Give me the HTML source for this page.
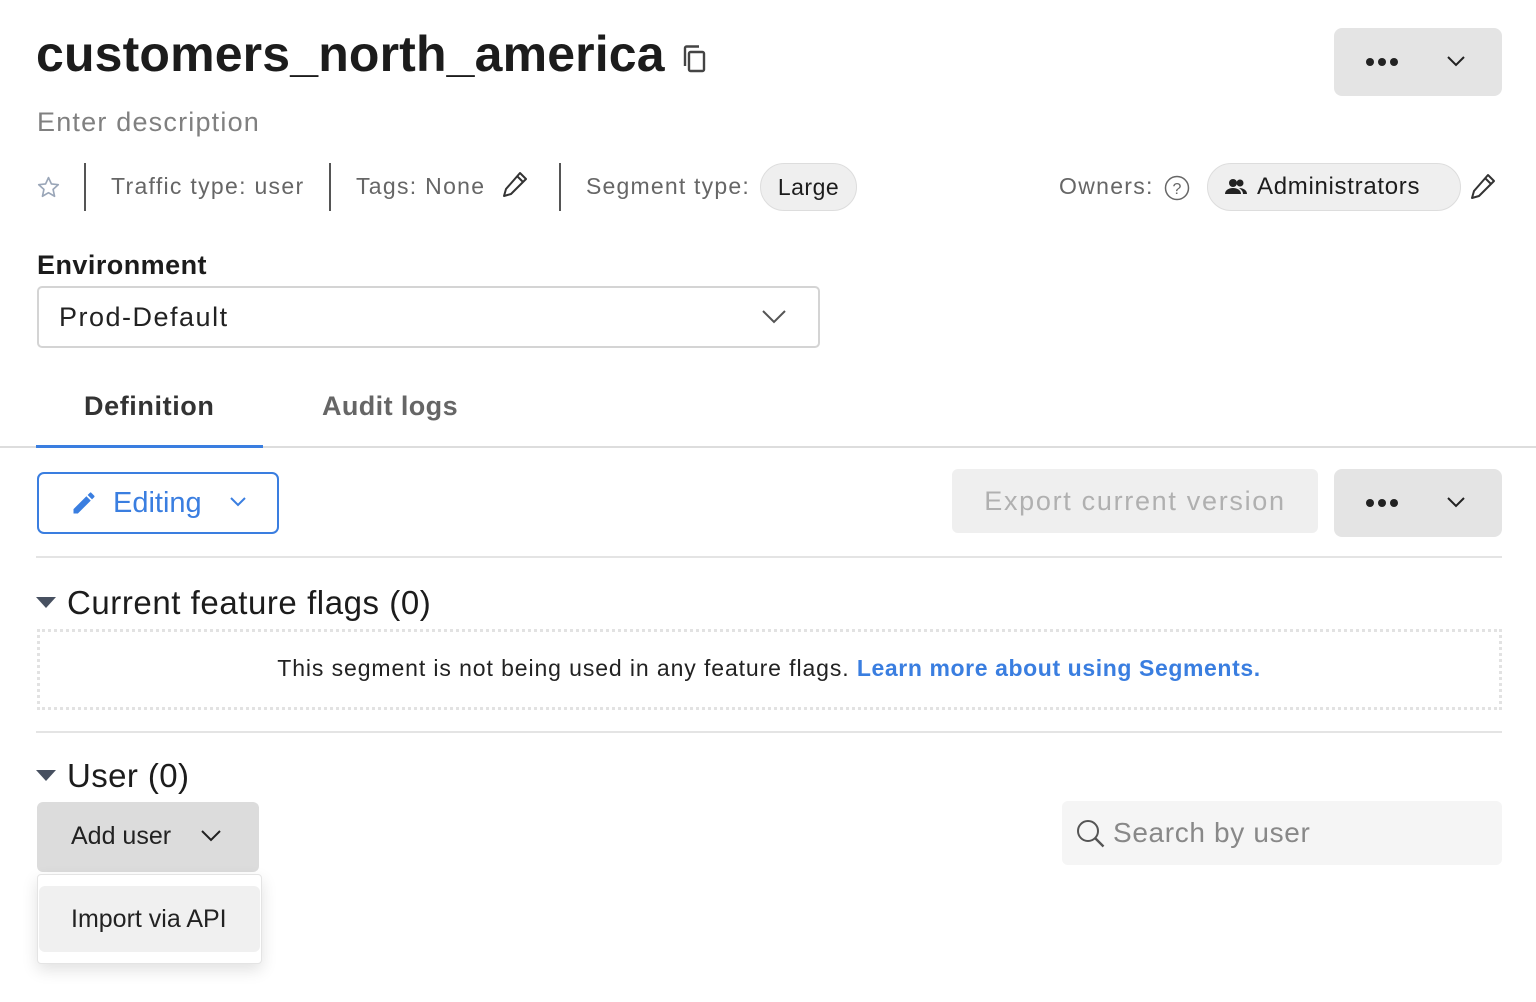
<!DOCTYPE html>
<html><head><meta charset="utf-8"><style>
*{box-sizing:border-box;margin:0;padding:0}
body{width:1536px;height:1002px;background:#fff;font-family:"Liberation Sans",sans-serif;color:#222;position:relative;overflow:hidden}
.a{position:absolute;white-space:nowrap}
.btn{position:absolute;background:#e4e4e4;border-radius:8px}
.sep{position:absolute;width:2px;background:#555;top:163px;height:48px}
</style></head><body>
<div class="a" style="left:36px;top:25px;font-size:50px;font-weight:bold;color:#1c1c1c;letter-spacing:0.15px">customers_north_america</div>
<svg class="a" style="left:682px;top:44px" width="26" height="30" viewBox="0 0 26 30"><rect x="7" y="8" width="15" height="19" rx="1.5" fill="none" stroke="#444" stroke-width="2.4"/><path d="M3 22V4a1.5 1.5 0 0 1 1.5-1.5H17" fill="none" stroke="#444" stroke-width="2.4"/></svg>

<div class="btn" style="left:1334px;top:28px;width:168px;height:68px"></div>
<svg class="a" style="left:1364px;top:55px" width="36" height="14"><circle cx="6" cy="7" r="4" fill="#222"/><circle cx="18" cy="7" r="4" fill="#222"/><circle cx="30" cy="7" r="4" fill="#222"/></svg>
<svg class="a" style="left:1446px;top:54px" width="20" height="14"><path d="M2 3l8 8 8-8" fill="none" stroke="#222" stroke-width="2"/></svg>

<div class="a" style="left:37px;top:107px;font-size:27px;color:#808080;letter-spacing:1.2px">Enter description</div>

<svg class="a" style="left:36px;top:175px" width="25" height="25" viewBox="0 0 24 24"><path d="M12 2.5l2.8 6.1 6.6.7-5 4.5 1.4 6.6L12 17l-5.8 3.4 1.4-6.6-5-4.5 6.6-.7z" fill="none" stroke="#9aa6b8" stroke-width="1.6" stroke-linejoin="round"/></svg>
<div class="sep" style="left:84px"></div>
<div class="a" style="left:111px;top:173px;font-size:23px;color:#666;letter-spacing:1.3px">Traffic type: user</div>
<div class="sep" style="left:329px"></div>
<div class="a" style="left:356px;top:173px;font-size:23px;color:#666;letter-spacing:1.3px">Tags: None</div>
<svg class="a" style="left:501px;top:170px" width="28" height="30" viewBox="0 0 28 30"><path d="M19 3l6 6L10 24l-7 2 2-7z M16 6l6 6" fill="none" stroke="#333" stroke-width="2" stroke-linejoin="round"/></svg>
<div class="sep" style="left:559px"></div>
<div class="a" style="left:586px;top:173px;font-size:23px;color:#666;letter-spacing:1.2px">Segment type:</div>
<div class="a" style="left:760px;top:163px;width:97px;height:48px;border-radius:24px;background:#efefef;border:1px solid #ddd;font-size:23px;color:#1c1c1c;text-align:center;line-height:46px;letter-spacing:0.5px">Large</div>

<div class="a" style="left:1059px;top:173px;font-size:23px;color:#666;letter-spacing:1.3px">Owners:</div>
<svg class="a" style="left:1164px;top:175px" width="26" height="26"><circle cx="13" cy="13" r="11.5" fill="none" stroke="#666" stroke-width="1.5"/><text x="13" y="19" font-size="16" fill="#666" text-anchor="middle" font-family="Liberation Sans">?</text></svg>
<div class="a" style="left:1207px;top:163px;width:254px;height:48px;border-radius:24px;background:#efefef;border:1px solid #ddd"></div>
<svg class="a" style="left:1225px;top:178px" width="22" height="18" viewBox="0 0 22 18"><circle cx="8" cy="5" r="4" fill="#222"/><path d="M0 16c0-4 4-6 8-6s8 2 8 6z" fill="#222"/><circle cx="15" cy="5" r="3.5" fill="#222"/><path d="M14 10c4 0 8 2 8 6h-4c0-2-1-4-4-6z" fill="#222"/></svg>
<div class="a" style="left:1257px;top:173px;font-size:24px;color:#1c1c1c;letter-spacing:0.7px">Administrators</div>
<svg class="a" style="left:1468px;top:172px" width="30" height="30" viewBox="0 0 28 30"><path d="M19 3l6 6L10 24l-7 2 2-7z M16 6l6 6" fill="none" stroke="#333" stroke-width="2" stroke-linejoin="round"/></svg>

<div class="a" style="left:37px;top:250px;font-size:27px;font-weight:bold;color:#1c1c1c;letter-spacing:0.45px">Environment</div>
<div class="a" style="left:37px;top:286px;width:783px;height:62px;border:2px solid #d4d4d4;border-radius:5px"></div>
<div class="a" style="left:59px;top:302px;font-size:27px;color:#222;letter-spacing:1.5px">Prod-Default</div>
<svg class="a" style="left:761px;top:308px" width="26" height="16"><path d="M2 3l11 11 11-11" fill="none" stroke="#555" stroke-width="2"/></svg>

<div class="a" style="left:0;top:446px;width:1536px;height:2px;background:#ddd"></div>
<div class="a" style="left:36px;top:445px;width:227px;height:3px;background:#3a7ee0"></div>
<div class="a" style="left:84px;top:391px;font-size:27px;font-weight:bold;color:#333;letter-spacing:0.6px">Definition</div>
<div class="a" style="left:322px;top:391px;font-size:27px;font-weight:bold;color:#666;letter-spacing:0.4px">Audit logs</div>

<div class="a" style="left:37px;top:472px;width:242px;height:62px;border:2px solid #3a7ee0;border-radius:7px"></div>
<svg class="a" style="left:70px;top:489px" width="28" height="28" viewBox="0 0 24 24"><path d="M3 17.25V21h3.75L17.8 9.94l-3.75-3.75zM20.7 7.04a1 1 0 0 0 0-1.41l-2.34-2.34a1 1 0 0 0-1.41 0l-1.83 1.83 3.75 3.75z" fill="#3a7ee0"/></svg>
<div class="a" style="left:113px;top:487px;font-size:29px;color:#3a7ee0">Editing</div>
<svg class="a" style="left:229px;top:496px" width="18" height="12"><path d="M2 2l7 7 7-7" fill="none" stroke="#3a7ee0" stroke-width="2"/></svg>

<div class="a" style="left:952px;top:469px;width:366px;height:64px;background:#efefef;border-radius:6px;font-size:27px;color:#b0b0b0;text-align:center;line-height:64px;letter-spacing:1.7px">Export current version</div>
<div class="btn" style="left:1334px;top:469px;width:168px;height:68px"></div>
<svg class="a" style="left:1364px;top:496px" width="36" height="14"><circle cx="6" cy="7" r="4" fill="#222"/><circle cx="18" cy="7" r="4" fill="#222"/><circle cx="30" cy="7" r="4" fill="#222"/></svg>
<svg class="a" style="left:1446px;top:495px" width="20" height="14"><path d="M2 3l8 8 8-8" fill="none" stroke="#222" stroke-width="2"/></svg>

<div class="a" style="left:36px;top:556px;width:1466px;height:2px;background:#e4e4e4"></div>
<svg class="a" style="left:36px;top:597px" width="20" height="12"><path d="M0 0h20L10 11z" fill="#475060"/></svg>
<div class="a" style="left:67px;top:584px;font-size:33px;color:#1c1c1c;letter-spacing:0.56px">Current feature flags (0)</div>
<div class="a" style="left:37px;top:629px;width:1465px;height:81px;border:3px dotted #e2e2e2"></div>
<div class="a" style="left:0;top:655px;width:1536px;text-align:center;font-size:23px;color:#222;padding-left:2px;letter-spacing:0.9px">This segment is not being used in any feature flags. <span style="color:#3a7ee0;font-weight:bold;letter-spacing:0.6px">Learn more about using Segments.</span></div>

<div class="a" style="left:36px;top:731px;width:1466px;height:2px;background:#e4e4e4"></div>
<svg class="a" style="left:36px;top:770px" width="20" height="12"><path d="M0 0h20L10 11z" fill="#475060"/></svg>
<div class="a" style="left:67px;top:757px;font-size:33px;color:#1c1c1c;letter-spacing:0.4px">User (0)</div>

<div class="a" style="left:37px;top:802px;width:222px;height:70px;background:#dcdcdc;border-radius:6px"></div>
<div class="a" style="left:71px;top:822px;font-size:25px;color:#222">Add user</div>
<svg class="a" style="left:200px;top:829px" width="22" height="14"><path d="M2 2l9 9 9-9" fill="none" stroke="#222" stroke-width="2"/></svg>
<div class="a" style="left:37px;top:874px;width:225px;height:90px;background:#fff;border:1px solid #e4e4e4;border-radius:4px;box-shadow:0 6px 16px rgba(0,0,0,0.12)"></div>
<div class="a" style="left:39px;top:886px;width:221px;height:66px;background:#f0f0f0;border-radius:6px"></div>
<div class="a" style="left:71px;top:905px;font-size:25px;color:#222">Import via API</div>

<div class="a" style="left:1062px;top:801px;width:440px;height:64px;background:#f5f5f5;border-radius:6px"></div>
<svg class="a" style="left:1075px;top:818px" width="32" height="32" viewBox="0 0 32 32"><circle cx="13" cy="13" r="10" fill="none" stroke="#555" stroke-width="2"/><path d="M20.5 20.5l8 8" stroke="#555" stroke-width="2.4"/></svg>
<div class="a" style="left:1113px;top:817px;font-size:28px;color:#888;letter-spacing:0.65px">Search by user</div>
</body></html>
